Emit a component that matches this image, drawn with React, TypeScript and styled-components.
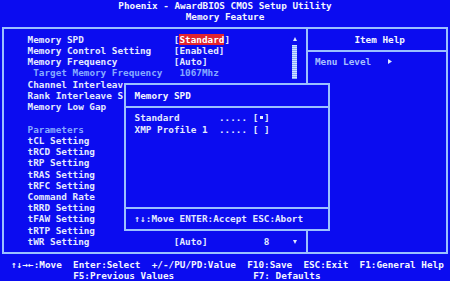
import React from "react";
import styled, { createGlobalStyle } from "styled-components";

const CW = 5.625;
const RH = 11.24;
const cols = (n: number) => `${n * CW}px`;

const BLUE = "#0b0cf0";
const TEXT = "#e4eaff";
const BRIGHT = "#f4f6ff";
const DIM = "#86aaff";
const LINE = "#9cc0ff";
const RED = "#e3232e";

const Global = createGlobalStyle`
  html, body { margin: 0; padding: 0; background: ${BLUE}; }
  body { width: 450px; height: 281px; overflow: hidden; }
`;

const Screen = styled.div`
  position: relative;
  width: 450px;
  height: 281px;
  background: ${BLUE};
  color: ${TEXT};
  font-family: "DejaVu Sans Mono", "Liberation Mono", monospace;
  font-weight: bold;
  font-size: 9.342px;
  line-height: ${RH}px;
  display: flex;
  flex-direction: column;
  white-space: pre;
  overflow: hidden;
`;

const Header = styled.header`
  height: ${RH * 2}px;
  display: flex;
  flex-direction: column;
  align-items: center;
  color: ${BRIGHT};
`;

const Frame = styled.main`
  margin: ${27 - RH * 2}px 2px 0 2px;
  height: 227px;
  box-sizing: border-box;
  border: 2px solid ${LINE};
  display: flex;
`;

const LeftPanel = styled.section`
  width: 303.5px;
  box-sizing: border-box;
  border-right: 2px solid ${LINE};
  padding: 4.72px 0 0 23.6px;
  display: flex;
  align-items: flex-start;
`;

const ItemList = styled.div`
  width: ${cols(47)};
  height: ${RH * 19}px;
  display: flex;
  flex-direction: column;
`;

const Item = styled.div<{ $dim?: boolean }>`
  display: flex;
  height: ${RH}px;
  color: ${(p) => (p.$dim ? DIM : TEXT)};
`;

const Label = styled.span<{ $indent?: number }>`
  width: ${cols(26)};
  box-sizing: border-box;
  padding-left: ${(p) => cols(p.$indent ?? 0)};
`;

const Value = styled.span`
  width: ${cols(16)};
`;

const Extra = styled.span`
  width: ${cols(5)};
`;

const Highlight = styled.span`
  display: inline-block;
  height: ${RH}px;
  background: ${RED};
  color: #ffffff;
`;

const ScrollBar = styled.div`
  width: ${cols(1)};
  height: ${RH * 19}px;
  display: flex;
  flex-direction: column;
  align-items: center;
`;

const ScrollArrow = styled.div`
  height: ${RH}px;
  display: flex;
  align-items: center;
  justify-content: center;
`;

const Thumb = styled.div`
  width: 5px;
  height: ${RH * 3}px;
  background: repeating-linear-gradient(
    180deg,
    #d2e2ff 0 1px,
    #88aaff 1px 2px
  );
`;

const Track = styled.div`
  flex: 1;
`;

const RightPanel = styled.aside`
  flex: 1;
  padding-top: 4.72px;
  display: flex;
  flex-direction: column;
`;

const HelpTitle = styled.div`
  height: ${RH}px;
  padding-left: 46.9px;
  color: ${BRIGHT};
`;

const Rule = styled.div`
  height: 2px;
  margin: ${(RH - 2) / 2}px 0;
  background: ${LINE};
`;

const HelpLine = styled.div`
  height: ${RH}px;
  padding-left: 7.5px;
  display: flex;
  align-items: center;
  color: #a8c0ff;
`;

const HelpLabel = styled.span`
  width: ${cols(13)};
`;

const Popup = styled.div`
  position: absolute;
  left: 124px;
  top: 83px;
  width: 206px;
  height: 148.4px;
  box-sizing: border-box;
  border: 2px solid ${LINE};
  background: ${BLUE};
  padding-top: 4.92px;
  display: flex;
  flex-direction: column;
`;

const PopupRow = styled.div<{ $bright?: boolean }>`
  height: ${RH}px;
  padding-left: 8.6px;
  display: flex;
  color: ${(p) => (p.$bright ? BRIGHT : TEXT)};
`;

const OptionList = styled.div`
  height: ${RH * 8}px;
  display: flex;
  flex-direction: column;
`;

const OptionName = styled.span`
  width: ${cols(15)};
`;

const Dots = styled.span`
  width: ${cols(6)};
`;

const MarkCell = styled.span<{ $on?: boolean }>`
  display: inline-flex;
  width: ${CW}px;
  height: ${RH}px;
  align-items: center;
  justify-content: center;
  &::after {
    content: "";
    width: 3px;
    height: 3px;
    background: ${(p) => (p.$on ? "#e8eeff" : "transparent")};
  }
`;

const Footer = styled.footer`
  margin-top: 4.52px;
  display: flex;
  flex-direction: column;
  color: ${BRIGHT};
`;

const FooterLine = styled.div<{ $start: number }>`
  height: ${RH}px;
  padding-left: ${(p) => cols(p.$start)};
  display: flex;
  gap: ${cols(2)};
`;

const Hint = styled.span<{ $w?: number }>`
  ${(p) => (p.$w ? `width: ${cols(p.$w)};` : "")}
`;

const Tri = ({ dir }: { dir: "up" | "down" | "right" }) => {
  const pts =
    dir === "up" ? "0,4 2,0 4,4" : dir === "down" ? "0,0 4,0 2,4" : "0,0 4,2.5 0,5";
  const w = 4;
  const h = dir === "right" ? 5 : 4;
  return (
    <svg width={w} height={h} viewBox={`0 0 ${w} ${h}`}>
      <polygon points={pts} fill="#dfe8ff" />
    </svg>
  );
};

type Row = {
  label: string;
  value?: React.ReactNode;
  extra?: string;
  dim?: boolean;
  indent?: number;
};

const rowsData: Row[] = [
  { label: "Memory SPD", value: <>[<Highlight>Standard</Highlight>]</> },
  { label: "Memory Control Setting", value: "[Enabled]" },
  { label: "Memory Frequency", value: "[Auto]" },
  { label: "Target Memory Frequency", value: " 1067Mhz", dim: true, indent: 1 },
  { label: "Channel Interleav" },
  { label: "Rank Interleave S" },
  { label: "Memory Low Gap" },
  { label: "" },
  { label: "Parameters", dim: true },
  { label: "tCL Setting" },
  { label: "tRCD Setting" },
  { label: "tRP Setting" },
  { label: "tRAS Setting" },
  { label: "tRFC Setting" },
  { label: "Command Rate" },
  { label: "tRRD Setting" },
  { label: "tFAW Setting" },
  { label: "tRTP Setting" },
  { label: "tWR Setting", value: "[Auto]", extra: "8" },
];

const options = [
  { name: "Standard", on: true },
  { name: "XMP Profile 1", on: false },
];

export default function App() {
  return (
    <>
      <Global />
      <Screen>
        <Header>
          <span>Phoenix - AwardBIOS CMOS Setup Utility</span>
          <span>Memory Feature</span>
        </Header>

        <Frame>
          <LeftPanel>
            <ItemList>
              {rowsData.map((r, i) => (
                <Item key={i} $dim={r.dim}>
                  <Label $indent={r.indent}>{r.label}</Label>
                  <Value>{r.value}</Value>
                  <Extra>{r.extra}</Extra>
                </Item>
              ))}
            </ItemList>
            <ScrollBar>
              <ScrollArrow>
                <Tri dir="up" />
              </ScrollArrow>
              <Thumb />
              <Track />
              <ScrollArrow>
                <Tri dir="down" />
              </ScrollArrow>
            </ScrollBar>
          </LeftPanel>

          <RightPanel>
            <HelpTitle>Item Help</HelpTitle>
            <Rule />
            <HelpLine>
              <HelpLabel>Menu Level</HelpLabel>
              <Tri dir="right" />
            </HelpLine>
          </RightPanel>
        </Frame>

        <Footer>
          <FooterLine $start={2}>
            <Hint>↑↓→←:Move</Hint>
            <Hint>Enter:Select</Hint>
            <Hint>+/-/PU/PD:Value</Hint>
            <Hint>F10:Save</Hint>
            <Hint>ESC:Exit</Hint>
            <Hint>F1:General Help</Hint>
          </FooterLine>
          <FooterLine $start={13}>
            <Hint $w={30}>F5:Previous Values</Hint>
            <Hint>F7: Defaults</Hint>
          </FooterLine>
        </Footer>

        <Popup>
          <PopupRow $bright>Memory SPD</PopupRow>
          <Rule />
          <OptionList>
            {options.map((o) => (
              <PopupRow key={o.name}>
                <OptionName>{o.name}</OptionName>
                <Dots>.....</Dots>
                <span>[</span>
                <MarkCell $on={o.on} />
                <span>]</span>
              </PopupRow>
            ))}
          </OptionList>
          <Rule />
          <PopupRow>↑↓:Move ENTER:Accept ESC:Abort</PopupRow>
        </Popup>
      </Screen>
    </>
  );
}
